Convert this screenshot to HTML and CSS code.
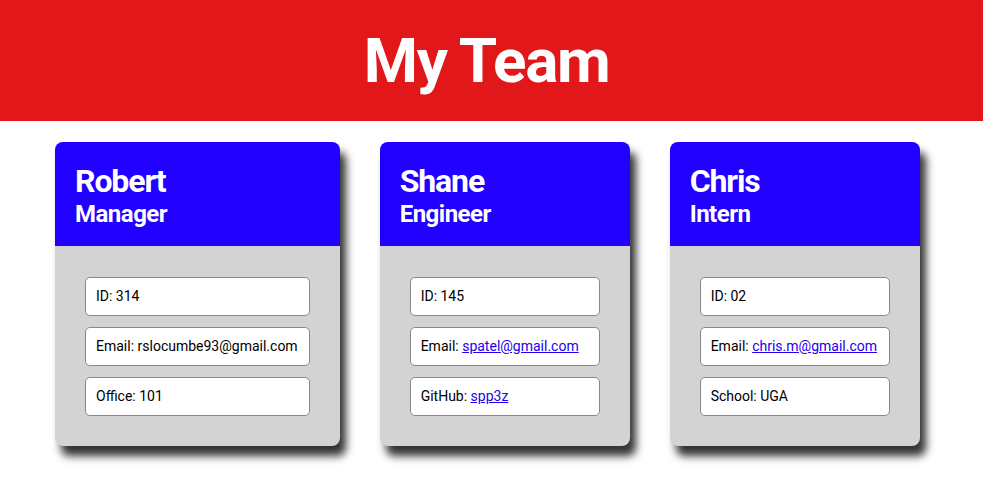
FILE: index.html
```html
<!DOCTYPE html>
<html>
<head>
<meta charset="utf-8">
<title>My Team</title>
<link rel="stylesheet" href="styles.css">
</head>
<body>
<header class="banner">
  <h1 class="banner-title">My Team</h1>
</header>
<main class="team">
  <section class="card">
    <div class="card-head">
      <h2 class="card-name">Robert</h2>
      <h3 class="card-role">Manager</h3>
    </div>
    <div class="card-body">
      <div class="info">ID: 314</div>
      <div class="info">Email: rslocumbe93@gmail.com</div>
      <div class="info">Office: 101</div>
    </div>
  </section>
  <section class="card">
    <div class="card-head">
      <h2 class="card-name">Shane</h2>
      <h3 class="card-role">Engineer</h3>
    </div>
    <div class="card-body">
      <div class="info">ID: 145</div>
      <div class="info">Email: <a href="#">spatel@gmail.com</a></div>
      <div class="info">GitHub: <a href="#">spp3z</a></div>
    </div>
  </section>
  <section class="card">
    <div class="card-head">
      <h2 class="card-name">Chris</h2>
      <h3 class="card-role">Intern</h3>
    </div>
    <div class="card-body">
      <div class="info">ID: 02</div>
      <div class="info">Email: <a href="#">chris.m@gmail.com</a></div>
      <div class="info">School: UGA</div>
    </div>
  </section>
</main>
</body>
</html>
```
FILE: styles.css
```css
* { box-sizing: border-box; }
body {
  margin: 0;
  font-family: Roboto, "Liberation Sans", sans-serif;
  background: #fff;
  color: #000;
}
.banner {
  background: #e1171a;
  height: 121px;
  padding-top: 24px;
  text-align: center;
}
.banner-title {
  margin: 0 10px 0 0;
  font-size: 62px;
  font-weight: 700;
  letter-spacing: -1.4px;
  color: #fff;
  line-height: normal;
}
.team {
  display: flex;
  align-items: flex-start;
  padding: 21px 0 40px 55px;
  gap: 40px;
}
.card {
  min-width: 250px;
  border-radius: 8px;
  overflow: hidden;
  background: #d3d3d3;
  box-shadow: 6px 10px 8px #333;
}
.card-head {
  background: #2200ff;
  color: #fff;
  padding: 20px 20px 18px;
  height: 104px;
}
.card-name {
  margin: 0;
  font-size: 32px;
  font-weight: 700;
  letter-spacing: -1.1px;
  line-height: normal;
}
.card-role {
  margin: 0;
  font-size: 24px;
  font-weight: 700;
  letter-spacing: -0.5px;
  line-height: normal;
}
.card-body {
  padding: 31px 30px 30px;
  display: flex;
  flex-direction: column;
  gap: 11px;
}
.info {
  background: #fff;
  border: 1px solid #888;
  border-radius: 5px;
  padding: 10px 11px 10px 10px;
  font-size: 14px;
  line-height: 17px;
  white-space: nowrap;
}
.info a {
  color: #2200ee;
  text-decoration: underline;
}
```
